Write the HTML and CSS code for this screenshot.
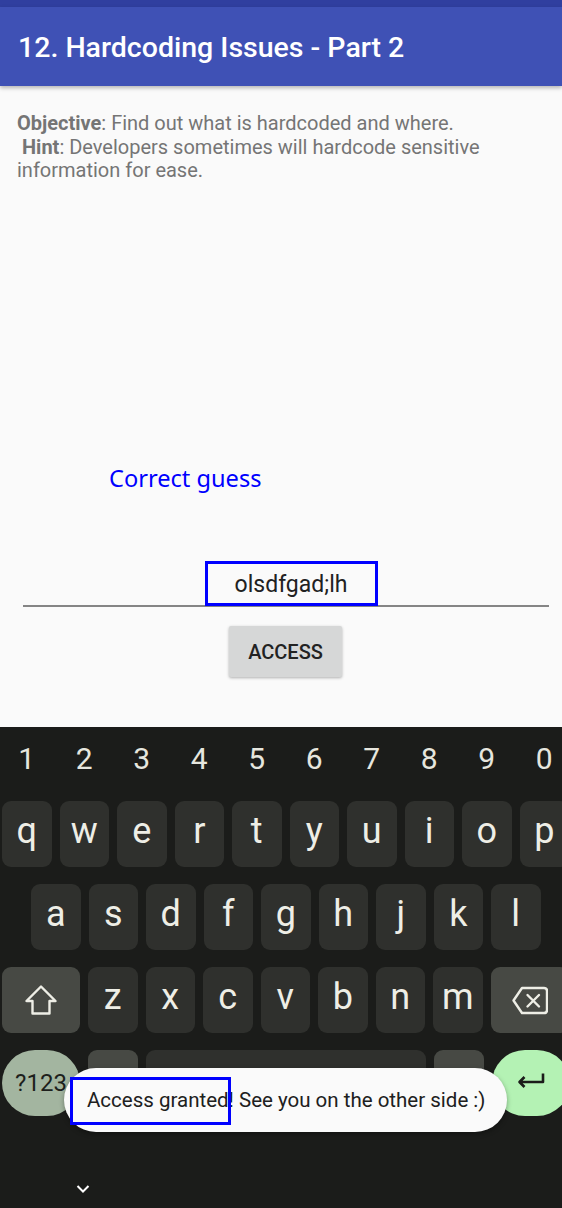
FILE: index.html
```html
<!DOCTYPE html>
<html lang="en">
<head>
<meta charset="utf-8">
<title>Hardcoding Issues - Part 2</title>
<link rel="stylesheet" href="styles.css">
</head>
<body>
<div class="screen">
  <div class="statusbar"></div>
  <header class="appbar"><h1 class="title">12. Hardcoding Issues - Part 2</h1></header>
  <main class="content">
    <p class="desc"><b>Objective</b>: Find out what is hardcoded and where.<br>&nbsp;<b>Hint</b>: Developers sometimes will hardcode sensitive information for ease.</p>
    <p class="result">Correct guess</p>
    <div class="field"><span class="value">olsdfgad;lh</span><span class="hl hl-field"></span></div>
    <button class="btn">ACCESS</button>
  </main>
  <section class="keyboard">
    <div class="numrow">
      <span class="num">1</span><span class="num">2</span><span class="num">3</span><span class="num">4</span><span class="num">5</span><span class="num">6</span><span class="num">7</span><span class="num">8</span><span class="num">9</span><span class="num">0</span>
    </div>
    <div class="row row1">
      <span class="key">q</span><span class="key">w</span><span class="key">e</span><span class="key">r</span><span class="key">t</span><span class="key">y</span><span class="key">u</span><span class="key">i</span><span class="key">o</span><span class="key">p</span>
    </div>
    <div class="row row2">
      <span class="key">a</span><span class="key">s</span><span class="key">d</span><span class="key">f</span><span class="key">g</span><span class="key">h</span><span class="key">j</span><span class="key">k</span><span class="key">l</span>
    </div>
    <div class="row row3">
      <span class="key key-fn key-wide"><svg width="32" height="30" viewBox="0 0 32 30"><path d="M16 1.5 L1.5 16 H7.5 V28.5 H24.5 V16 H30.5 Z" fill="none" stroke="#eeeee6" stroke-width="2.4" stroke-linejoin="round"/></svg></span>
      <span class="key">z</span><span class="key">x</span><span class="key">c</span><span class="key">v</span><span class="key">b</span><span class="key">n</span><span class="key">m</span>
      <span class="key key-fn key-wide key-back"><svg width="36" height="29" viewBox="0 0 36 29"><path d="M10 2 H32 Q35 2 35 5 V24 Q35 27 32 27 H10 L1.5 14.5 Z" fill="none" stroke="#eeeee6" stroke-width="2.4" stroke-linejoin="round"/><path d="M15.5 9 L27 20.5 M27 9 L15.5 20.5" stroke="#eeeee6" stroke-width="2.4" stroke-linecap="round"/></svg></span>
    </div>
    <div class="row row4">
      <span class="key key-sym">?123</span>
      <span class="key key-fn key-comma"></span>
      <span class="key key-space"></span>
      <span class="key key-fn key-period"></span>
      <span class="key key-enter"><svg width="28" height="15" viewBox="0 0 28 15"><path d="M26 0.5 V9 H2.5 M7.5 4 L2.5 9 L7.5 14" fill="none" stroke="#1b1c1a" stroke-width="2.6" stroke-linejoin="round"/></svg></span>
    </div>
    <div class="navbar"><svg width="14" height="8" viewBox="0 0 14 8"><path d="M1.5 1 L7 6.5 L12.5 1" fill="none" stroke="#ffffff" stroke-width="2"/></svg></div>
  </section>
  <div class="toast"><span class="toast-text">Access granted! See you on the other side :)</span><span class="hl hl-toast"></span></div>
</div>
</body>
</html>
```

FILE: styles.css
```css
* { box-sizing: border-box; margin: 0; padding: 0; }
html, body { width: 562px; height: 1208px; overflow: hidden; background: #fafafa; }
body { font-family: Roboto, "Noto Sans", sans-serif; }

.screen { position: relative; width: 562px; height: 1208px; display: flex; flex-direction: column; }

.statusbar { height: 7px; background: #303f9f; flex: none; }
.appbar {
  height: 79px; flex: none; background: #3f51b5;
  display: flex; align-items: center; padding: 3px 0 0 18px;
  box-shadow: 0 2px 4px rgba(0,0,0,0.28); position: relative; z-index: 1;
}
.title { color: #ffffff; font-size: 28.5px; font-weight: 500; line-height: 1; }

.content { height: 641px; flex: none; padding-top: 26px; display: flex; flex-direction: column; align-items: flex-start; }
.desc { font-size: 20px; line-height: 23.5px; color: #757575; padding: 0 18px 0 17px; }
.desc b { font-weight: 700; }
.result { margin: 280px 0 0 109px; color: #0000ff; font-family: "Noto Sans", sans-serif; font-size: 23.6px; line-height: 30px; }

.field {
  position: relative; margin: 76px 0 0 23px; width: 526px;
  border-bottom: 2px solid #858585; padding-bottom: 5px;
  text-align: center; font-size: 23px; line-height: 30px; color: #212121;
}
.value { display: inline-block; padding: 1px 0 0 10px; }
.hl { position: absolute; border: 3px solid #0000ff; }
.hl-field { left: 182px; top: -8px; width: 173px; height: 45px; }

.btn {
  margin: 19px 0 0 229px; width: 113px; height: 51px; border: none; border-radius: 2px;
  background: #d6d7d7; box-shadow: 0 1px 3px rgba(0,0,0,0.3); padding-top: 2px;
  font-family: Roboto, sans-serif; font-size: 20px; font-weight: 500; color: #222222; line-height: 1;
}

.keyboard { flex: 1; background: #1b1c1a; overflow: hidden; display: flex; flex-direction: column; gap: 17px; }
.numrow { height: 74px; margin-bottom: -17px; display: flex; gap: 8px; padding: 17px 0 0 2px; }
.num { flex: none; width: 49.5px; text-align: center; color: #e6e6de; font-size: 30px; line-height: 1; }
.row { height: 66px; display: flex; gap: 8px; padding-left: 2px; flex: none; }
.row2 { padding-left: 31px; }
.key {
  flex: none; width: 49.5px; height: 66px; border-radius: 9px; background: #2f302d;
  color: #eeeee6; font-size: 36px; line-height: 1;
  display: flex; align-items: center; justify-content: center; padding-bottom: 6px;
}
.key-fn { background: #474944; }
.key-wide { width: 78px; padding-bottom: 0; }
.key-sym { width: 78px; border-radius: 33px; background: #a3b5a0; color: #1d1f1c; font-size: 24px; padding-bottom: 0; }
.key-comma { width: 50px; }
.key-space { width: 280px; }
.key-period { width: 50px; }
.key-enter { width: 78px; border-radius: 33px; background: #b4f2b4; padding-bottom: 6px; }

.navbar { margin-top: auto; height: 38px; display: flex; align-items: center; padding-left: 76px; }
.navbar svg { display: block; }

.toast {
  position: absolute; left: 64px; top: 1068px; width: 443px; height: 64px;
  border-radius: 32px; background: #fafafa; box-shadow: 0 2px 5px rgba(0,0,0,0.35);
  display: flex; align-items: center; padding-left: 23px;
  font-size: 20.5px; color: #202020; line-height: 1;
}
.toast-text { white-space: nowrap; }
.hl-toast { left: 6px; top: 9px; width: 161px; height: 48px; }
```
